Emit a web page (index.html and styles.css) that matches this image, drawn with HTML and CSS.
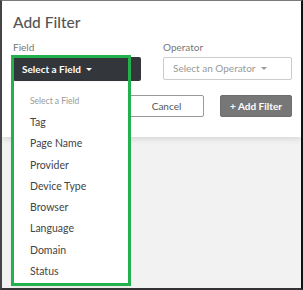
FILE: index.html
```html
<!DOCTYPE html>
<html lang="en">

<head>
    <meta charset="UTF-8">
    <title>Add Filter</title>
    <link rel="stylesheet" href="styles.css">
</head>

<body>
    <div class="frame">
        <div class="modal">
            <h1>Add Filter</h1>
            <div class="fields">
                <div class="field">
                    <label>Field</label>
                    <div class="field-group">
                        <button class="btn-dark">Select a Field <span class="caret"></span></button>
                        <ul class="menu">
                            <li class="menu-header">Select a Field</li>
                            <li>Tag</li>
                            <li>Page Name</li>
                            <li>Provider</li>
                            <li>Device Type</li>
                            <li>Browser</li>
                            <li>Language</li>
                            <li>Domain</li>
                            <li>Status</li>
                        </ul>
                        <div class="highlight"></div>
                    </div>
                </div>
                <div class="field">
                    <label>Operator</label>
                    <div class="select">Select an Operator <span class="caret"></span></div>
                </div>
            </div>
            <div class="actions">
                <button class="btn-cancel">Cancel</button>
                <button class="btn-add">+ Add Filter</button>
            </div>
        </div>
    </div>
</body>

</html>
```

FILE: styles.css
```css
body {
    margin: 0;
    font-family: Lato, "Noto Sans", sans-serif;
}

.frame {
    box-sizing: border-box;
    width: 303px;
    height: 290px;
    background: #f2f2f2;
    border-top: 1px solid #7a7a7a;
    border-left: 2px solid #444;
    border-right: 2px solid #111;
    border-bottom: 2px solid #333;
    overflow: hidden;
}

.modal {
    background: #fff;
    height: 136px;
    box-sizing: border-box;
    padding: 11px 9px 0 11px;
    box-shadow: 0 2px 6px rgba(0, 0, 0, 0.12);
}

h1 {
    margin: 0;
    font-size: 15.5px;
    line-height: 20px;
    font-weight: 500;
    color: #555;
}

.fields {
    display: flex;
    gap: 22px;
    margin-top: 8px;
}

.field label {
    display: block;
    font-size: 10px;
    line-height: 14px;
    color: #777;
    margin-bottom: 3px;
}

.field-group {
    position: relative;
}

.btn-dark {
    display: block;
    width: 128px;
    height: 24px;
    border: 0;
    border-radius: 2px;
    background: #33363b;
    color: #fff;
    font-family: inherit;
    font-size: 10px;
    font-weight: 700;
    text-align: left;
    padding: 0 0 0 9px;
}

.caret {
    display: inline-block;
    margin-left: 3px;
    vertical-align: 2px;
    border-top: 3px solid currentColor;
    border-left: 3px solid transparent;
    border-right: 3px solid transparent;
}

.select {
    box-sizing: border-box;
    width: 129px;
    height: 23px;
    margin-top: 1px;
    border: 1px solid #ccc;
    border-radius: 2px;
    font-size: 10px;
    line-height: 21px;
    color: #999;
    padding-left: 9px;
}

.actions {
    display: flex;
    justify-content: flex-end;
    gap: 16px;
    margin-top: 14px;
}

.actions button {
    height: 22px;
    border-radius: 2px;
    font-family: inherit;
    font-size: 10px;
}

.btn-cancel {
    width: 75px;
    background: #fff;
    border: 1px solid #999;
    color: #555;
}

.btn-add {
    width: 72px;
    background: #777;
    border: 1px solid #6e6e6e;
    color: #fff;
    font-weight: 700;
}

/* dropdown */
.menu {
    position: absolute;
    top: 100%;
    left: 0;
    margin: 1px 0 0;
    list-style: none;
    box-sizing: border-box;
    width: 115px;
    height: 202px;
    padding: 10px 0 0 17px;
    background: #fff;
    box-shadow: 0 1px 4px rgba(0, 0, 0, 0.15);
    z-index: 2;
}

.menu li {
    font-size: 10.5px;
    line-height: 21.3px;
    color: #444;
}

.menu .menu-header {
    font-size: 8.5px;
    line-height: 19px;
    color: #999;
    margin-bottom: 1px;
}

.highlight {
    position: absolute;
    left: -2px;
    top: -2px;
    width: 120px;
    height: 231px;
    box-sizing: border-box;
    border: 3px solid #22b14c;
    z-index: 3;
}
```
